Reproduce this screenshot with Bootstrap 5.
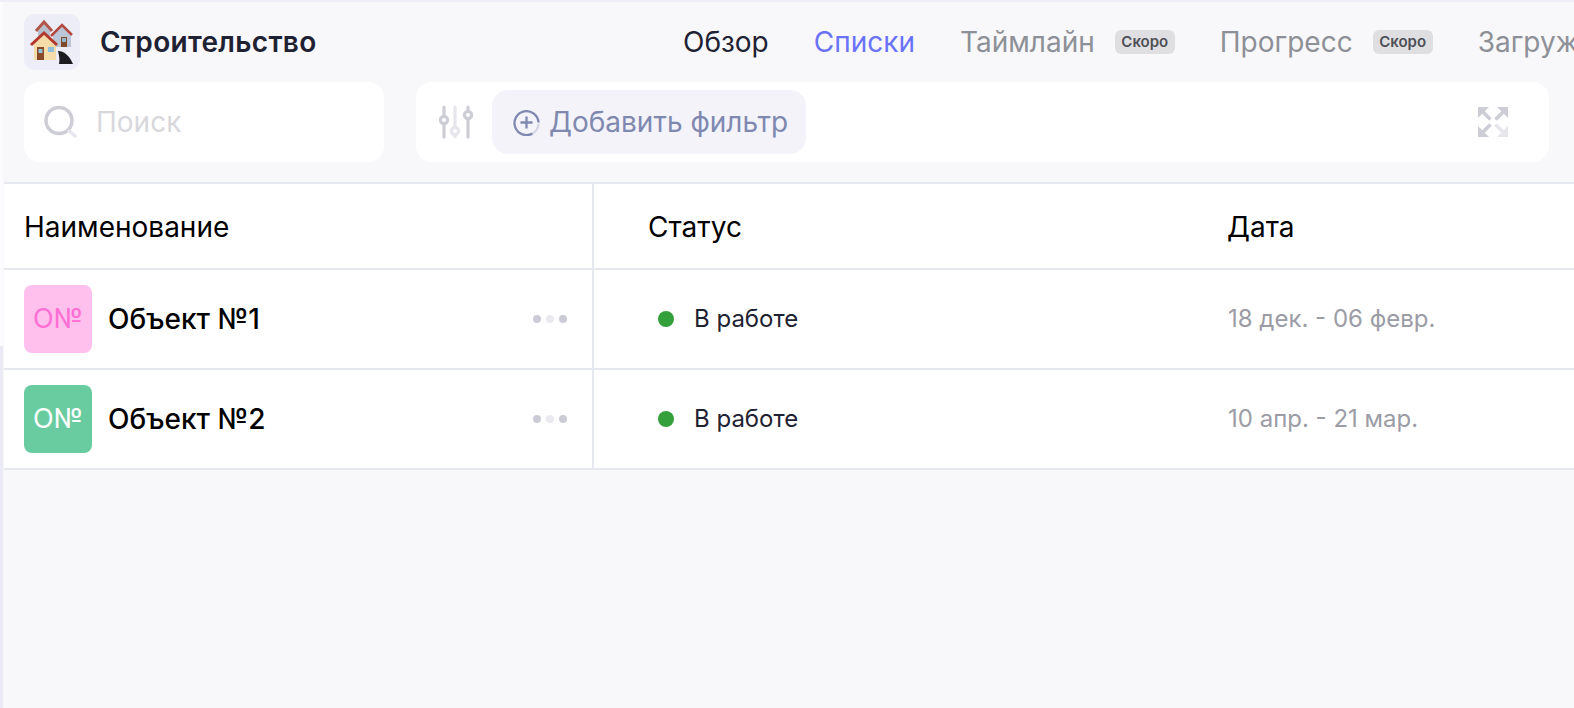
<!DOCTYPE html>
<html lang="ru">
<head>
    <meta charset="utf-8">
    <title>Строительство</title>
    <link href="https://cdn.jsdelivr.net/npm/bootstrap@5.3.3/dist/css/bootstrap.min.css" rel="stylesheet">
    <script src="https://cdn.jsdelivr.net/npm/bootstrap@5.3.3/dist/js/bootstrap.bundle.min.js"></script>
    <style>
        html, body {
            height: 100%;
            overflow: hidden;
        }
        body {
            background-color: #f8f8fb;
            font-family: Inter, "Liberation Sans", sans-serif;
            color: #000;
        }
        .app-wrap {
            height: 708px;
            border-top: 2px solid #eeeff6;
            padding-left: 4px;
            background:
                linear-gradient(#e9eaf3, #e9eaf3) left 344px / 3px 100% no-repeat,
                linear-gradient(#fcfcfe, #fcfcfe) left top / 3px 100% no-repeat;
        }
        /* header */
        .top-bar {
            height: 78px;
            padding: 12px 0 10px 20px;
            overflow: hidden;
            white-space: nowrap;
        }
        .logo-box {
            width: 56px;
            height: 56px;
            border-radius: 10px;
            background: #ecedf6;
            flex: none;
        }
        .app-title {
            margin-left: 20px;
            width: 583px;
            flex: none;
            font-size: 28px;
            font-weight: 600;
            letter-spacing: .3px;
            color: #1f2233;
        }
        .top-link {
            font-size: 28px;
            color: #8e9097;
            text-decoration: none;
            margin-left: 45px;
        }
        .top-link:first-child { margin-left: 0; }
        .top-link.is-dark { color: #1f2233; }
        .top-link.is-active { color: #6a72f8; }
        .soon-tag {
            width: 60px;
            text-align: center;
            font-size: 15px;
            font-weight: 600;
            line-height: 24px;
            height: 24px;
            border-radius: 6px;
            background: #dfdfe2;
            color: #4e4f56;
            margin-left: 20px;
        }
        /* filters */
        .filter-row {
            padding: 0 25px 0 20px;
            height: 102px;
        }
        .white-box {
            background: #fff;
            border-radius: 16px;
            height: 80px;
            margin-top: 2px;
        }
        .search-box {
            width: 360px;
            flex: none;
            padding-left: 19px;
            font-size: 28px;
            color: #d8d8dc;
            margin-right: 32px;
        }
        .search-box span { margin-left: 19px; }
        .filter-box {
            padding: 0 41px 0 23px;
        }
        .add-filter {
            height: 64px;
            width: 314px;
            flex: none;
            padding: 0 0 0 21px;
            margin-left: 19px;
            border-radius: 16px;
            background: #f3f3f9;
            font-size: 28px;
            color: #8088b0;
            white-space: nowrap;
        }
        .add-filter svg { margin-right: 9px; }
        /* table */
        .obj-table {
            background: #fff;
            border-top: 2px solid #e6e8f0;
        }
        .obj-row {
            height: 100px;
            border-bottom: 2px solid #e6e8f0;
        }
        .obj-row.is-head { height: 86px; font-size: 28px; }
        .is-head > div { padding-top: 2px; }
        .cell-name {
            width: 590px;
            flex: none;
            padding: 0 25px 0 20px;
            border-right: 2px solid #e6e8f0;
        }
        .cell-status {
            width: 634px;
            flex: none;
            padding-left: 54px;
        }
        .cell-date { margin-left: -1px; }
        .obj-row .cell-status.body-cell {
            padding-left: 64px;
            font-size: 24px;
            color: #1f2233;
        }
        .body-date {
            font-size: 24px;
            color: #9b9ca5;
        }
        .obj-thumb {
            width: 68px;
            height: 68px;
            border-radius: 8px;
            font-size: 27px;
            flex: none;
        }
        .thumb-pink { background: #ffc0ee; color: #ff6fd4; }
        .thumb-green { background: #69cca0; color: #fff; }
        .obj-name {
            margin-left: 16px;
            font-size: 28px;
            font-weight: 500;
        }
        .row-dots { gap: 5px; }
        .row-dots i {
            display: block;
            width: 8px;
            height: 8px;
            border-radius: 50%;
            background: #cbcbd6;
        }
        .row-dots i:nth-child(2) { background: #e9e9ef; }
        .status-dot {
            width: 16px;
            height: 16px;
            border-radius: 50%;
            background: #34a03c;
            margin-right: 20px;
        }
    </style>
</head>
<body>
    <div class="app-wrap">

        <!-- header -->
        <div class="top-bar d-flex align-items-center">
            <div class="logo-box">
                <svg width="56" height="56" viewBox="0 0 56 56">
                    <!-- back left house -->
                    <path d="M14 17l6-7 6 7v8H14z" fill="#b7bfcd"/>
                    <path d="M12 17l8-9 8 9" fill="none" stroke="#b2564c" stroke-width="3"/>
                    <!-- back right house -->
                    <path d="M29 21l9-9 9 9v12H29z" fill="#bcc6d6"/>
                    <path d="M27 22l11-11 10 10" fill="none" stroke="#b24a40" stroke-width="2.500"/>
                    <rect x="37" y="23" width="6" height="10" fill="#7d4a2c"/>
                    <rect x="38" y="24" width="4" height="4" fill="#8fb4cc"/>
                    <!-- front house -->
                    <path d="M10 30l10-10 12 10v16H10z" fill="#f6dca8"/>
                    <path d="M7 31l13-12 13 12" fill="none" stroke="#b5382c" stroke-width="3"/>
                    <rect x="13" y="33" width="7" height="13" fill="#8a4a2a"/>
                    <rect x="14.500" y="35" width="4" height="4" fill="#8fc0dc"/>
                    <rect x="24" y="33" width="6" height="5" fill="#8fc0dc"/>
                    <!-- road -->
                    <path d="M34 37c7 0 12 6 15 13H35c1-4 0-9-1-13z" fill="#1c1c20"/>
                </svg>
            </div>
            <div class="app-title">Строительство</div>
            <nav class="d-flex align-items-center">
                <a class="top-link is-dark" href="#">Обзор</a>
                <a class="top-link is-active" href="#">Списки</a>
                <a class="top-link" href="#">Таймлайн</a>
                <span class="soon-tag">Скоро</span>
                <a class="top-link" href="#">Прогресс</a>
                <span class="soon-tag">Скоро</span>
                <a class="top-link" href="#">Загруженность</a>
            </nav>
        </div>

        <!-- search and filter -->
        <div class="filter-row d-flex">
            <div class="white-box search-box d-flex align-items-center">
                <svg width="34" height="34" viewBox="0 0 34 34" fill="none" stroke-linecap="round">
                    <circle cx="16" cy="15.500" r="13" stroke="#cdcdd6" stroke-width="3.500"/>
                    <path d="M26 26l6 5" stroke="#e6e6ec" stroke-width="3.500"/>
                </svg>
                <span>Поиск</span>
            </div>
            <div class="white-box filter-box flex-grow-1 d-flex align-items-center">
                <svg width="34" height="34" viewBox="0 0 34 34" fill="none" stroke-linecap="round" stroke-width="3.200">
                    <path d="M5 2v30M29 2v30" stroke="#cdcdd6"/>
                    <path d="M16 2v30" stroke="#e6e6ec"/>
                    <circle cx="5" cy="15" r="3.600" fill="#fff" stroke="#cdcdd6"/>
                    <circle cx="16" cy="26" r="3.600" fill="#fff" stroke="#e6e6ec"/>
                    <circle cx="29" cy="10" r="3.600" fill="#fff" stroke="#cdcdd6"/>
                </svg>
                <div class="add-filter d-flex align-items-center">
                    <svg width="27" height="27" viewBox="0 0 27 27" fill="none" stroke-width="2.300">
                        <path d="M19.500 24.500A12 12 0 1 1 25.500 13.500" stroke="#8088b0"/>
                        <path d="M25.500 14.500A12 12 0 0 1 19.500 24.500" stroke="#d4d6e4"/>
                        <path d="M13.500 7.500v12M7.500 13.500h12" stroke="#8088b0"/>
                    </svg>
                    Добавить фильтр
                </div>
                <svg class="ms-auto" width="30" height="30" viewBox="0 0 30 30">
                    <g fill="#cdcdd6" stroke-width="3.600">
                        <path d="M0 0h11L0 11z"/>
                        <path d="M30 0H19l11 11z"/>
                        <path d="M0 30h11L0 19z"/>
                        <path d="M3 3l9.500 9.500M27 3l-9.500 9.500M3 27l9.500-9.500" stroke="#cdcdd6"/>
                    </g>
                    <path d="M30 30H19l11-11z" fill="#e6e6ec"/>
                    <path d="M27 27l-9.500-9.500" stroke="#e6e6ec" stroke-width="3.600"/>
                </svg>
            </div>
        </div>

        <!-- objects table -->
        <div class="obj-table">
            <div class="obj-row is-head d-flex">
                <div class="cell-name d-flex align-items-center">Наименование</div>
                <div class="cell-status d-flex align-items-center">Статус</div>
                <div class="cell-date d-flex align-items-center">Дата</div>
            </div>
            <div class="obj-row d-flex">
                <div class="cell-name d-flex align-items-center">
                    <div class="obj-thumb thumb-pink d-flex align-items-center justify-content-center">O№</div>
                    <div class="obj-name flex-grow-1">Объект №1</div>
                    <div class="row-dots d-flex"><i></i><i></i><i></i></div>
                </div>
                <div class="cell-status body-cell d-flex align-items-center">
                    <span class="status-dot"></span>В работе
                </div>
                <div class="body-date d-flex align-items-center">18 дек. - 06 февр.</div>
            </div>
            <div class="obj-row d-flex">
                <div class="cell-name d-flex align-items-center">
                    <div class="obj-thumb thumb-green d-flex align-items-center justify-content-center">O№</div>
                    <div class="obj-name flex-grow-1">Объект №2</div>
                    <div class="row-dots d-flex"><i></i><i></i><i></i></div>
                </div>
                <div class="cell-status body-cell d-flex align-items-center">
                    <span class="status-dot"></span>В работе
                </div>
                <div class="body-date d-flex align-items-center">10 апр. - 21 мар.</div>
            </div>
        </div>
    </div>
</body>
</html>
